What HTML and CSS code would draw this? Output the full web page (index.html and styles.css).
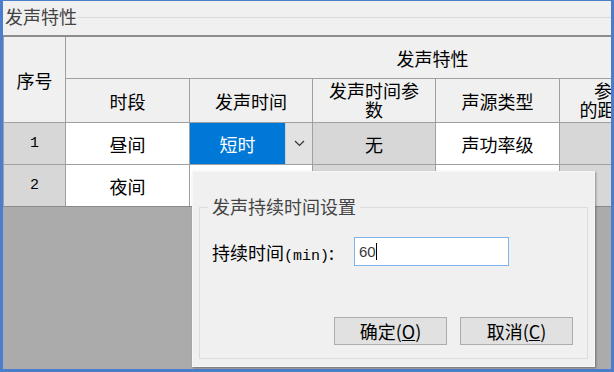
FILE: index.html
```html
<!DOCTYPE html>
<html lang="zh-CN">
<head>
  <meta charset="UTF-8" />
  <title>发声特性</title>
  <link rel="stylesheet" href="styles.css">
</head>
<body>

<div class="frame">
  <div class="caption">
    <span class="caption-text">发声特性</span>
    <i class="caption-rule"></i>
  </div>

  <div class="sheet">
    <div class="grid">
      <div class="hd idx-hd">序号</div>
      <div class="hd group-hd">发声特性</div>
      <div class="hd">时段</div>
      <div class="hd">发声时间</div>
      <div class="hd wrap">发声时间参<br>数</div>
      <div class="hd">声源类型</div>
      <div class="hd wrap">参考点<br>的距离(m)</div>
      <div class="hd">声级</div>

      <div class="idx">1</div>
      <div class="cell">昼间</div>
      <div class="cell select">
        <span class="select-value">短时</span>
        <span class="select-btn">
          <svg width="11" height="7" viewBox="0 0 11 7"><path d="M1 1 L5.5 5.5 L10 1" fill="none" stroke="#333" stroke-width="1.2"/></svg>
        </span>
      </div>
      <div class="cell off">无</div>
      <div class="cell">声功率级</div>
      <div class="cell off"></div>
      <div class="cell"></div>

      <div class="idx">2</div>
      <div class="cell">夜间</div>
      <div class="cell"></div>
      <div class="cell off"></div>
      <div class="cell"></div>
      <div class="cell off"></div>
      <div class="cell"></div>
    </div>
  </div>

  <div class="dialog">
    <div class="groupbox">
      <span class="legend">发声持续时间设置</span>
      <div class="field-row">
        <label class="field-label">持续时间<span class="mono">(min)</span>:</label>
        <div class="field-input">60<span class="caret"></span></div>
      </div>
      <div class="btn-row">
        <button class="btn">确定(<u>O</u>)</button>
        <button class="btn">取消(<u>C</u>)</button>
      </div>
    </div>
  </div>
</div>

</body>
</html>
```

FILE: styles.css
```css
* {
  box-sizing: border-box;
}

body {
  margin: 0;
  width: 614px;
  height: 372px;
  overflow: hidden;
  font-family: "Noto Sans CJK SC", "Microsoft YaHei", sans-serif;
  font-size: 18px;
  color: #000;
  background: #fff;
}

.frame {
  position: relative;
  width: 614px;
  height: 372px;
  border-style: solid;
  border-color: #4a7dcc;
  border-width: 1px 3px 3px 3px;
  background: #f0f0f0;
  display: flex;
  flex-direction: column;
}

.caption {
  height: 34px;
  display: flex;
  align-items: flex-start;
  padding: 4px 0 0 2px;
}

.caption-text {
  line-height: 22px;
  color: #444;
}

.caption-rule {
  flex: 1;
  height: 1px;
  margin-top: 12px;
  background: #dadada;
}

.sheet {
  flex: 1;
  overflow: hidden;
  background: #ababab;
  border-top: 2px solid #8c8c8c;
}

.grid {
  display: grid;
  grid-template-columns: 61px 123px 122px 122px 123px 122px 116px;
  grid-template-rows: 41px 43px 41px 41px;
  gap: 1px;
  width: 797px;
  background: #a0a0a0;
  border-left: 1px solid #a0a0a0;
  border-bottom: 1px solid #8a8a8a;
}

.hd {
  background: #f0f0f0;
  display: flex;
  align-items: center;
  justify-content: center;
  text-align: center;
  line-height: 20px;
}

.idx-hd {
  grid-row: span 2;
}

.group-hd {
  grid-column: span 6;
}

.wrap {
  line-height: 19px;
  padding-bottom: 2px;
}

.idx {
  background: #d7d7d7;
  display: flex;
  align-items: center;
  justify-content: center;
  font-family: "Liberation Mono", monospace;
  font-size: 15px;
}

.cell {
  background: #fff;
  display: flex;
  align-items: center;
  justify-content: center;
}

.cell.off {
  background: #d7d7d7;
}

.select {
  justify-content: flex-start;
}

.select-value {
  width: 95px;
  height: 100%;
  background: #0078d7;
  color: #fff;
  display: flex;
  align-items: center;
  justify-content: center;
}

.select-btn {
  flex: 1;
  height: 100%;
  background: #e2e2e2;
  border-left: 1px solid #cfcfcf;
  display: flex;
  align-items: center;
  justify-content: center;
}

.dialog {
  position: absolute;
  left: 189px;
  top: 170px;
  width: 403px;
  height: 196px;
  background: #f0f0f0;
  border: 1px solid #f7f7f7;
  box-shadow: 1px 1px 2px rgba(0, 0, 0, 0.35);
  padding: 35px 0 0 6px;
}

.groupbox {
  position: relative;
  width: 389px;
  height: 152px;
  border: 1px solid #dcdcdc;
  padding: 29px 14px 13px 12px;
  display: flex;
  flex-direction: column;
}

.legend {
  position: absolute;
  left: 8px;
  top: -12px;
  padding: 0 4px;
  line-height: 20px;
  background: #f0f0f0;
  color: #444;
}

.field-row {
  display: flex;
  align-items: center;
}

.field-label {
  width: 142px;
}

.mono {
  font-family: "Liberation Mono", monospace;
  font-size: 15px;
}

.field-input {
  width: 155px;
  height: 29px;
  background: #fff;
  border: 1px solid #7eb4ea;
  padding: 0 4px;
  display: flex;
  align-items: center;
  font-family: "Liberation Sans", sans-serif;
  font-size: 15px;
  color: #3a3a3a;
}

.caret {
  width: 1px;
  height: 17px;
  background: #000;
}

.btn-row {
  margin-top: auto;
  display: flex;
  justify-content: flex-end;
  gap: 13px;
}

.btn {
  width: 113px;
  height: 28px;
  padding: 0;
  background: #e1e1e1;
  border: 1px solid #adadad;
  font-family: inherit;
  font-size: 18px;
  line-height: 20px;
  color: #000;
}
```
